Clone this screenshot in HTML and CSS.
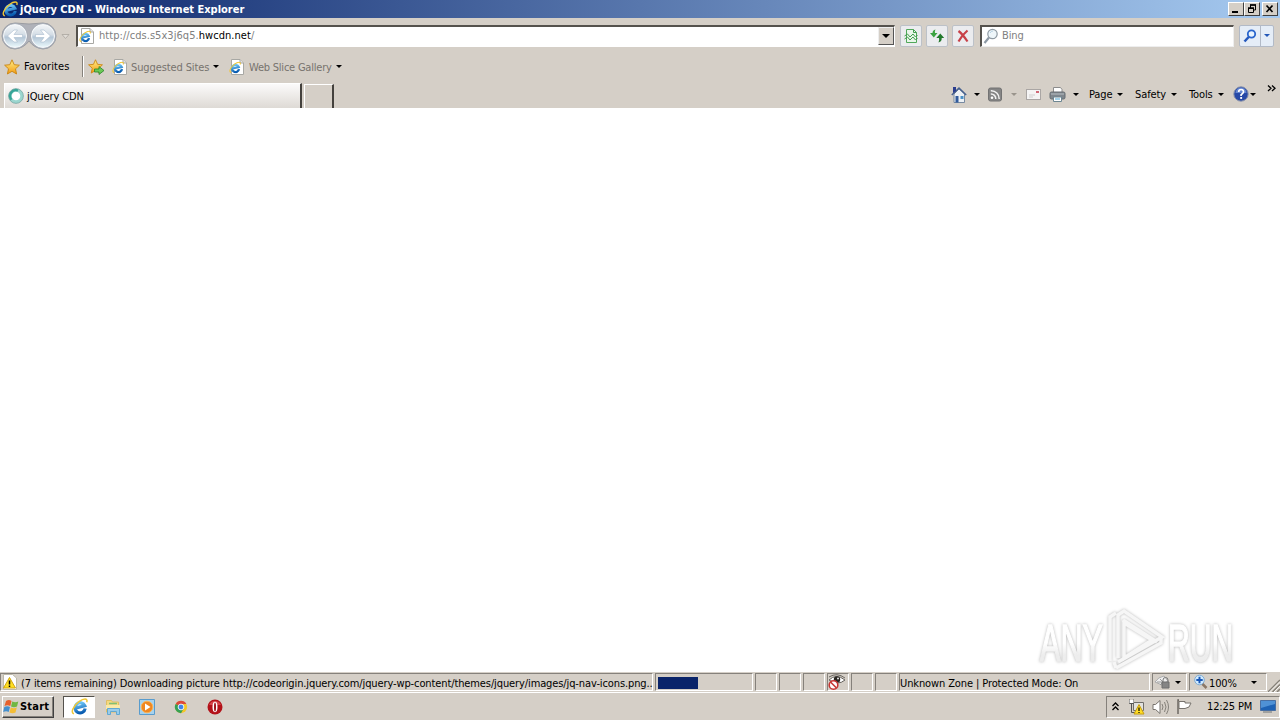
FILE: index.html
```html
<!DOCTYPE html>
<html lang="en">
<head>
    <meta charset="UTF-8">
    <title>jQuery CDN - Windows Internet Explorer</title>
    <link rel="stylesheet" href="styles.css">
</head>
<body>
    <!-- shared icons -->
    <svg class="defs" width="0" height="0">
        <linearGradient id="blue" x1="0" y1="0" x2="0" y2="1">
            <stop offset="0" stop-color="#6cc4f5"/>
            <stop offset="1" stop-color="#0a5cb0"/>
        </linearGradient>
        <linearGradient id="gold" x1="0" y1="0" x2="0" y2="1">
            <stop offset="0" stop-color="#fff08a"/>
            <stop offset="1" stop-color="#f39a10"/>
        </linearGradient>
        <symbol id="ie" viewBox="0 0 16 16">
            <g transform="rotate(-14 8 8)">
                <path d="M12.700 11.200A4.800 4.800 0 1 1 13 8.500H4.500" fill="none" stroke="url(#blue)" stroke-width="3"/>
            </g>
            <path d="M2.800 14.800C-.8 14 2.200 7.200 7.800 3.200 11.500.6 16.200-.3 14.800 4" fill="none" stroke="#f0c634" stroke-width="1.400"/>
        </symbol>
        <symbol id="iepage" viewBox="0 0 16 16">
            <path d="M2.500.5h8.500l3.500 3.500v11.500h-12z" fill="#fff" stroke="#a8a8a4"/>
            <path d="M11 .5V4h3.500" fill="#e4e4e4" stroke="#a8a8a4"/>
            <use href="#ie" x="0" y="2.500" width="12" height="12"/>
        </symbol>
        <symbol id="star" viewBox="0 0 16 16">
            <path d="M8 .8l2.200 4.900 5.200.5-3.900 3.600 1.100 5.200L8 12.300 3.400 15l1.100-5.200L.6 6.200l5.200-.5z" fill="url(#gold)" stroke="#c98410" stroke-width=".9"/>
        </symbol>
    </svg>

    <div class="titlebar">
        <svg class="title-icon" width="16" height="16"><use href="#ie"/></svg>
        <span class="title-text">jQuery CDN - Windows Internet Explorer</span>
        <div class="window-buttons">
            <div class="win-btn"><svg width="14" height="12"><path d="M3 9h6" stroke="#000" stroke-width="2"/></svg></div>
            <div class="win-btn"><svg width="14" height="12"><path d="M5 2h6M5.500 2v3M10.500 2v5H9M3 5.500h6M3.500 5v4.500h5V5" fill="none" stroke="#000"/><path d="M5 2h6M3 5h6" stroke="#000" stroke-width="1.500"/></svg></div>
            <div class="win-btn close"><svg width="14" height="12"><path d="M3.500 2.500l6 6.500M9.500 2.500l-6 6.500" stroke="#000" stroke-width="1.700"/></svg></div>
        </div>
    </div>

    <div class="navbar">
        <svg class="back-forward" width="74" height="30" viewBox="0 0 74 30">
            <defs>
                <linearGradient id="orb" x1="0" y1="0" x2="0" y2="1">
                    <stop offset="0" stop-color="#f4f7f9"/>
                    <stop offset=".45" stop-color="#d3dce5"/>
                    <stop offset=".55" stop-color="#b3c5d6"/>
                    <stop offset="1" stop-color="#ecfafd"/>
                </linearGradient>
            </defs>
            <path d="M15 2Q29 4 43 2A13 13 0 0 1 43 28Q34 27 29 20 24 27 15 28A13 13 0 0 1 15 2z" fill="#b0b2b9" stroke="#9a9ca2"/>
            <circle cx="15" cy="15" r="11.500" fill="url(#orb)" stroke="#f6f8fa" stroke-width="1.300"/>
            <circle cx="43" cy="15" r="11.500" fill="url(#orb)" stroke="#f6f8fa" stroke-width="1.300"/>
            <circle cx="15" cy="15" r="12.500" fill="none" stroke="#a3abb6" stroke-width=".8"/>
            <circle cx="43" cy="15" r="12.500" fill="none" stroke="#a3abb6" stroke-width=".8"/>
            <path d="M22.500 13.500H14l3.500-4.500h-3.500L7.500 15l6.500 6h3.500L14 16.500h8.500z" fill="#fff" stroke="#a9bccf" stroke-width=".6"/>
            <path d="M35.500 13.500H44L40.500 9H44l6.500 6-6.500 6h-3.500l3.500-4.500h-8.500z" fill="#fff" stroke="#a9bccf" stroke-width=".6"/>
            <path d="M62 13.500h7l-3.500 4z" fill="#e1ddd7" stroke="#aaa59e" stroke-width=".8"/>
        </svg>
        <div class="address">
            <svg width="16" height="16"><use href="#iepage"/></svg>
            <span class="url">http://cds.s5x3j6q5.<b>hwcdn.net</b>/</span>
            <div class="drop-btn"><i class="arrow wide"></i></div>
        </div>
        <div class="tool-btn">
            <svg width="16" height="16"><path d="M3.500 1.500h7l3 3v10h-10z" fill="#e9f6ea" stroke="#50a85a"/><path d="M10.500 1.500v3h3M1.500 8l3-2 2.500 3 3-3 2.500 3 2-2M1.500 11l3-2 2.500 3 3-3 2.500 3 2-2" fill="none" stroke="#449d50"/></svg>
        </div>
        <div class="tool-btn">
            <svg width="16" height="16"><path d="M6.500 1.500Q3.500 2 3.500 5H1l3.800 4.500L8.500 5H6Q5.500 3 6.500 1.500z" fill="#3ba340"/><path d="M9.500 14.500q3.500-1 3.200-4.500h2.500L11.300 5.500 7.300 10H10q.6 2.500-.5 4.500z" fill="#23792c"/></svg>
        </div>
        <div class="tool-btn">
            <svg width="16" height="16"><path d="M3.500 3q4 3 9 10.500M12.500 2.500Q7 7 3.500 13.500" fill="none" stroke="#c84048" stroke-width="2.200"/></svg>
        </div>
        <div class="search">
            <svg width="16" height="16"><circle cx="9.500" cy="6" r="4.700" fill="#eef6fa" stroke="#8f9aa3" stroke-width="1.200"/><path d="M6 9.500L1.500 15" stroke="#8d99a5" stroke-width="2.200"/><path d="M7 5q1-2 3-2" fill="none" stroke="#b6d2e3"/></svg>
            <span>Bing</span>
        </div>
        <div class="search-go">
            <div class="go-main"><svg width="16" height="16"><circle cx="9.500" cy="6" r="3.700" fill="#e7f3ff" stroke="#2864cc" stroke-width="1.800"/><path d="M6.700 9L2.500 13.500" stroke="#2458bd" stroke-width="2.500"/></svg></div>
            <div class="go-drop"><i class="arrow blue"></i></div>
        </div>
    </div>

    <div class="favorites">
        <svg width="16" height="16"><use href="#star"/></svg>
        <span class="fav-label">Favorites</span>
        <i class="divider"></i>
        <svg class="add-fav" width="17" height="16"><use href="#star" width="15" height="15"/><path d="M6.500 10H11V7.500l5 4-5 4V13H6.500z" fill="#6cc956" stroke="#27852a" stroke-width=".8"/></svg>
        <svg class="suggested-icon" width="16" height="16"><use href="#iepage"/></svg>
        <span class="link suggested">Suggested Sites</span><i class="arrow"></i>
        <svg class="slice-icon" width="16" height="16"><use href="#iepage"/></svg>
        <span class="link slice">Web Slice Gallery</span><i class="arrow"></i>
    </div>

    <div class="tabrow">
        <div class="tab">
            <svg width="16" height="16"><circle cx="8" cy="8" r="5.800" fill="#fff" stroke="#9bd6cf" stroke-width="3"/><path d="M10 2.500A5.800 5.800 0 0 0 3.500 11.700" fill="none" stroke="#35a698" stroke-width="2.500"/><circle cx="8" cy="8" r="7.400" fill="none" stroke="#6b9e9b" stroke-width=".7"/></svg>
            <span>jQuery CDN</span>
        </div>
        <div class="new-tab"></div>
        <div class="commands">
            <svg class="home" width="16" height="17" viewBox="0 0 16 17"><path d="M3 8v8.500h10.500V8L8 3z" fill="#edf1f5" stroke="#7789a0"/><path d="M.8 9L8 2l7.200 7" fill="none" stroke="#47618f" stroke-width="1.500"/><path d="M2 1h3v4L2 7z" fill="#2b3d8e"/><path d="M4.500 10h3v6.500h-3z" fill="#315b9c"/><path d="M9.500 10h3v3h-3z" fill="#4b91c7"/></svg>
            <i class="arrow a-home"></i>
            <svg class="feed" width="14" height="15" viewBox="0 0 14 15"><rect x=".5" y="1" width="13" height="13" rx="2" fill="#858585" stroke="#727272"/><circle cx="4" cy="10.800" r="1.300" fill="#fff"/><path d="M2.800 7a4.700 4.700 0 0 1 5 5M2.800 3.700a8 8 0 0 1 8.400 8.300" fill="none" stroke="#f2f2f2" stroke-width="1.500"/></svg>
            <i class="arrow a-feed dim"></i>
            <svg class="mail" width="15" height="11" viewBox="0 0 15 11"><rect x=".5" y=".5" width="14" height="10" fill="#f5f4f4" stroke="#aaa6a4"/><path d="M10 2h3v2h-3z" fill="#d06675"/><path d="M3 6h6M3 8h4" stroke="#d0cece"/></svg>
            <svg class="print" width="17" height="17" viewBox="0 0 17 17"><path d="M4.500 6V1.500h7l1.500 2V7" fill="#fff" stroke="#8c8c8c"/><rect x="1" y="6" width="15" height="7" rx="1.500" fill="#80878d" stroke="#666d73"/><path d="M2 8h13" stroke="#b7bec3"/><path d="M4.500 11h8v4.500h-8z" fill="#fff" stroke="#6e8792"/><path d="M6 13h5" stroke="#4ba4d0"/></svg>
            <i class="arrow a-print"></i>
            <span class="cmd page">Page</span><i class="arrow"></i>
            <span class="cmd safety">Safety</span><i class="arrow"></i>
            <span class="cmd tools">Tools</span><i class="arrow"></i>
            <svg class="help" width="16" height="16"><circle cx="8" cy="8" r="7.200" fill="#2749a7" stroke="#8992aa"/><path d="M2.500 7a5.500 5.500 0 0 1 11 0z" fill="#6486d1"/><path d="M5.700 6q0-2.500 2.400-2.500T10.500 6Q10.500 7 8.100 8.800V10" fill="none" stroke="#fff" stroke-width="1.700"/><path d="M7.200 11h1.900v1.900H7.200z" fill="#fff"/></svg>
            <i class="arrow"></i>
            <svg class="chevrons" width="9" height="7"><path d="M1 .5l3 2.700-3 2.700M5 .5l3 2.700-3 2.700" fill="none" stroke="#000" stroke-width="1.300"/></svg>
        </div>
    </div>

    <div class="content">
        <div class="watermark">
            <svg width="210" height="66" viewBox="0 0 210 66">
                <defs>
                    <linearGradient id="mark" x1="0" y1="0" x2="0" y2="1">
                        <stop offset=".5" stop-color="#fff"/>
                        <stop offset=".7" stop-color="#ededed"/>
                    </linearGradient>
                </defs>
                <g class="mark-text">
                    <text transform="translate(4 54) scale(.6 1)">ANY</text>
                    <text transform="translate(132 54) scale(.59 1)">RUN</text>
                </g>
                <g class="mark-logo">
                    <path d="M82 51V8l6-4 38 26-44 25"/>
                    <path d="M88 16v35l28-18z"/>
                    <path d="M74 54V10l6-4M80 61l45-25v-6M80 61l-2-6M87 13l34 22"/>
                </g>
            </svg>
        </div>
    </div>

    <div class="statusbar">
        <div class="pane message">
            <svg width="16" height="16"><path d="M1.500.5h9l4 3.500v11.500h-13z" fill="#fff" stroke="#bdb9aa"/><path d="M7.500 3.500L13.500 14h-12z" fill="#ffdf22" stroke="#d1a512"/><path d="M7.500 6.500v4M7.500 11.500v1.500" stroke="#000" stroke-width="1.500"/></svg>
            <span>(7 items remaining) Downloading picture http://codeorigin.jquery.com/jquery-wp-content/themes/jquery/images/jq-nav-icons.png..</span>
        </div>
        <div class="pane progress"><div class="bar"></div></div>
        <div class="pane small"></div>
        <div class="pane small"></div>
        <div class="pane small"></div>
        <div class="pane small">
            <svg width="20" height="17" viewBox="0 0 20 17"><path d="M2 6q7-7 16 0-7 6-16 0z" fill="#fff" stroke="#65625d"/><path d="M2 3q8-5 16 1" fill="none" stroke="#68645f"/><circle cx="10" cy="5.500" r="3.200" fill="#292622"/><circle cx="11" cy="4.500" r=".9" fill="#fff"/><circle cx="6.500" cy="11" r="4.300" fill="#fff" stroke="#c73532" stroke-width="1.600"/><path d="M3.500 8l6 6" stroke="#c73532" stroke-width="1.600"/></svg>
        </div>
        <div class="pane small"></div>
        <div class="pane small"></div>
        <div class="pane zone"><span>Unknown Zone | Protected Mode: On</span></div>
        <div class="pane privacy">
            <svg width="18" height="16" viewBox="0 0 18 16"><path d="M1 8q3-5 9-6l4 5-6 4z" fill="#efefef" stroke="#aaa"/><path d="M3 8h6M6 5l3 3-3 3" fill="none" stroke="#999"/><path d="M9 8V6a2.500 2.500 0 0 1 5 0v2" fill="none" stroke="#777"/><path d="M8 8h7v6H8z" fill="#858585" stroke="#6e6e6e"/></svg>
            <i class="arrow"></i>
        </div>
        <div class="pane zoom">
            <svg width="14" height="16"><path d="M7.500 9l5 5" stroke="#8b7765" stroke-width="2.500"/><circle cx="5.500" cy="6" r="4.800" fill="#d1ebff" stroke="#7eabd3"/><path d="M5.500 2.800v6.400M2.300 6h6.400" stroke="#1957b7" stroke-width="2"/></svg>
            <span>100%</span><i class="arrow"></i>
        </div>
        <svg class="grip" width="12" height="13"><path d="M0 13L12 1M4.500 13L12 5.500M9 13l3-3" stroke="#858077" stroke-width="1.500"/><path d="M1.500 13L12 2.500M6 13l6-6" stroke="#fff" stroke-width=".8"/></svg>
    </div>

    <div class="taskbar">
        <div class="start">
            <svg width="17" height="16" viewBox="0 0 17 16"><path d="M3 2q3-2 5.500 0L7.300 7Q4.500 5.500 1.500 7z" fill="#e6602c"/><path d="M9.300 2.500q3 1.500 6 0L14 7.500q-3 1.500-6 0z" fill="#70b744"/><path d="M1.300 8q3-1.500 5.700 0L5.700 13q-2.500-1.500-5.500 0z" fill="#438fce"/><path d="M7.800 8.500q3 1.500 6 0L12.500 13.500q-3 1.500-6 0z" fill="#f3bd36"/></svg>
            <span>Start</span>
        </div>
        <div class="task active"><svg width="17" height="17"><use href="#ie"/></svg></div>
        <div class="task"><svg width="16" height="16"><path d="M1.500 1.500h5l1 1.500h6v10h-12z" fill="#f4d982" stroke="#e0bf62"/><path d="M4 4.500h8" stroke="#7fbf74" stroke-width="1.500"/><path d="M1 6h14v4H1z" fill="#fae9a8"/><path d="M2.500 9.500h12v6h-3v-3h-6v3h-3z" fill="#9accea" stroke="#62a8d2"/></svg></div>
        <div class="task"><svg width="16" height="16"><path d="M.5.500h15v15H.5z" fill="#a7d2ed" stroke="#599ccd"/><circle cx="8" cy="8" r="5.800" fill="#ef8721" stroke="#fbb356"/><path d="M6 4.500L11.500 8 6 11.500z" fill="#fff"/></svg></div>
        <div class="task"><svg width="14" height="14" viewBox="0 0 16 16"><circle cx="8" cy="8" r="7" fill="#f4c628"/><path d="M8 8L1.900 4.500A7 7 0 0 1 14.100 4.500H8z" fill="#dd493a"/><path d="M1.900 4.500A7 7 0 0 0 8 15l3-5.200L8 8z" fill="#35a054"/><circle cx="8" cy="8" r="3.300" fill="#3f83e8" stroke="#fff"/></svg></div>
        <div class="task"><svg width="16" height="16"><circle cx="8" cy="8" r="7.500" fill="#b31219"/><path d="M2 6a6.500 6.500 0 0 1 12 0z" fill="#d6454a"/><ellipse cx="8" cy="8" rx="2.500" ry="5.200" fill="#fff"/><ellipse cx="8" cy="8" rx="1" ry="4.500" fill="#9d1219"/></svg></div>
        <div class="tray">
            <svg class="up" width="7" height="9"><path d="M.5 4l3-3 3 3M.5 8l3-3 3 3" fill="none" stroke="#000" stroke-width="1.300"/></svg>
            <svg class="net" width="17" height="16" viewBox="0 0 17 16"><path d="M5.500 3.500h10v8h-10z" fill="#e2e2df" stroke="#706e6b"/><path d="M1.500.5v4h4v-4M3.500 4v9.500H8" fill="none" stroke="#555"/><path d="M1.500 1h4v3h-4z" fill="#fff"/><path d="M11 5.500l5 9.500H6z" fill="#ffdd24" stroke="#c69d12"/><path d="M11 8.500v3.500M11 13v1" stroke="#000" stroke-width="1.200"/></svg>
            <svg class="volume" width="17" height="16" viewBox="0 0 17 16"><path d="M1 5.500h2.500L8 1.500v13L3.500 10.500H1z" fill="#fff" stroke="#77736d"/><path d="M10 5q2 3 0 6M12.500 3q3 5 0 10M14.500 1q4 7 0 14" fill="none" stroke="#85817a"/></svg>
            <svg class="flag" width="17" height="16" viewBox="0 0 17 16"><path d="M2 15V1h1" stroke="#66625d" fill="none" stroke-width="1.400"/><path d="M3 2.500h6v1.500h6L13 8l-4 1.500H3z" fill="#fff" stroke="#77736d"/></svg>
            <span class="clock">12:25 PM</span>
            <svg class="desktop" width="16" height="15" viewBox="0 0 16 15"><path d="M.5 1.500h15v10H.5z" fill="#1e62b4" stroke="#496fa2"/><path d="M1 2h14v3L1 9z" fill="#4f91d5"/><path d="M3 13h9" stroke="#6f7478"/></svg>
        </div>
    </div>
</body>
</html>
```

FILE: styles.css
```css
* {
    box-sizing: border-box;
}

body {
    margin: 0;
    width: 1280px;
    height: 720px;
    overflow: hidden;
    display: flex;
    flex-direction: column;
    background: #d5cfc7;
    color: #000;
    font: 11px/14px "DejaVu Sans Condensed", "DejaVu Sans", sans-serif;
    white-space: nowrap;
    letter-spacing: -0.11px;
}

svg {
    display: block;
    flex: none;
}

.defs {
    position: absolute;
}

.arrow {
    flex: none;
    border: 3px solid transparent;
    border-top-color: #000;
    border-bottom: 0;
}

.arrow.wide {
    border-width: 4px 4px 0;
}

.arrow.blue {
    border-top-color: #2458b8;
}

.arrow.dim {
    border-top-color: #99948c;
}

/* title bar */
.titlebar {
    height: 18px;
    display: flex;
    align-items: center;
    padding: 0 2px;
    background: linear-gradient(to right, #0a246a, #a6caf0);
    color: #fff;
}

.title-text {
    margin-left: 2px;
    padding-top: 1px;
    font-weight: bold;
    letter-spacing: -0.01px;
}

.window-buttons {
    display: flex;
    margin-left: auto;
}

.win-btn {
    width: 16px;
    height: 14px;
    background: #d5cfc7;
    border: 1px solid;
    border-color: #fff #404040 #404040 #fff;
}

.win-btn.close {
    margin-left: 2px;
}

/* address row */
.navbar {
    height: 35px;
    display: flex;
    align-items: center;
}

.back-forward {
    margin-right: 2px;
}

.address {
    width: 819px;
    height: 22px;
    display: flex;
    align-items: center;
    padding-left: 1px;
    background: #fff;
    border: 1px solid #fff;
    border-top: 2px solid #55524d;
    border-left: 2px solid #55524d;
}

.url {
    margin-left: 4px;
    color: #808080;
    letter-spacing: 0.05px;
}

.url b {
    font-weight: normal;
    color: #000;
}

.drop-btn {
    width: 16px;
    height: 18px;
    display: flex;
    align-items: center;
    justify-content: center;
    margin-left: auto;
    background: #d5cfc7;
    border: 1px solid;
    border-color: #eee #555 #555 #eee;
}

.tool-btn {
    width: 22px;
    height: 22px;
    display: flex;
    align-items: center;
    justify-content: center;
    margin-left: 4px;
    background: #ebecef;
    border: 1px solid #bcc1c8;
    border-radius: 2px;
}

.address + .tool-btn {
    margin-left: 5px;
}

.search {
    width: 254px;
    height: 22px;
    display: flex;
    align-items: center;
    margin-left: 6px;
    padding-left: 1px;
    background: #fff;
    border: 1px solid #eee;
    border-top: 2px solid #55524d;
    border-left: 2px solid #55524d;
    color: #808080;
}

.search span {
    margin-left: 3px;
}

.search-go {
    width: 35px;
    height: 22px;
    display: flex;
    margin-left: 5px;
    background: #e5edf7;
    border: 1px solid #b2bac7;
    border-radius: 2px;
}

.go-main,
.go-drop {
    display: flex;
    align-items: center;
    justify-content: center;
}

.go-main {
    width: 21px;
    border-right: 1px solid #b2bac7;
}

.go-drop {
    flex: 1;
}

/* favorites row */
.favorites {
    height: 27px;
    display: flex;
    align-items: center;
    padding-left: 4px;
}

.fav-label {
    width: 58px;
    margin-left: 4px;
    letter-spacing: 0.1px;
}

.divider {
    width: 2px;
    height: 21px;
    background: #85817b;
    border-right: 1px solid #fff;
}

.add-fav {
    margin-left: 4px;
}

.suggested-icon {
    margin-left: 7px;
}

.slice-icon {
    margin-left: 10px;
}

.link {
    margin-left: 3px;
    padding-top: 2px;
    color: #77736e;
}

.suggested {
    width: 82px;
}

.slice {
    width: 87px;
    margin-left: 4px;
    letter-spacing: -0.22px;
}

/* tabs and command bar */
.tabrow {
    height: 28px;
    display: flex;
    align-items: flex-end;
    padding-left: 4px;
}

.tab {
    width: 298px;
    height: 25px;
    display: flex;
    align-items: center;
    padding-left: 3px;
    background: linear-gradient(to bottom, #fbfafa, #dedad5);
    border-top: 1px solid #fff;
    border-left: 1px solid #fff;
    border-right: 2px solid #44413d;
}

.tab span {
    margin-left: 3px;
    padding-top: 1px;
}

.new-tab {
    width: 30px;
    height: 24px;
    margin-left: 2px;
    border: 1px solid #fff;
    border-right: 2px solid #44413d;
    border-bottom: 0;
}

.commands {
    height: 28px;
    display: flex;
    align-items: center;
    margin-left: auto;
    padding-right: 4px;
}

.a-home {
    margin-left: 7px;
}

.feed {
    margin-left: 8px;
}

.a-feed {
    margin-left: 9px;
}

.mail {
    margin-left: 9px;
}

.print {
    margin-left: 8px;
}

.a-print {
    margin-left: 7px;
}

.cmd {
    margin-left: 12px;
    padding-top: 1px;
}

.page {
    width: 28px;
    margin-left: 10px;
}

.safety {
    width: 36px;
}

.tools {
    width: 29px;
}

.help {
    margin: 0 1px 0 9px;
}

.chevrons {
    margin: -12px 0 0 11px;
}

/* page */
.content {
    flex: 1;
    display: flex;
    align-items: flex-end;
    justify-content: flex-end;
    background: #fff;
}

.watermark {
    margin: 0 34px -1px 0;
}

.watermark svg {
    filter: drop-shadow(0 0 1.5px #b8b8b8);
}

.mark-text {
    font: 51px "Liberation Sans", sans-serif;
    letter-spacing: 0;
    fill: url(#mark);
    stroke: url(#mark);
    stroke-width: 1.5;
}

.mark-logo {
    fill: none;
    stroke: #f6f6f6;
    stroke-width: 3.5;
}

/* status bar */
.statusbar {
    height: 21px;
    display: flex;
    align-items: center;
    border-bottom: 1px solid #fff;
}

.pane {
    height: 18px;
    flex: none;
    display: flex;
    align-items: center;
    margin-right: 2px;
    border: 1px solid;
    border-color: #85817b #fff #fff #85817b;
}

.pane span {
    padding-top: 3px;
}

.message {
    width: 653px;
    padding-left: 1px;
}

.message span {
    margin-left: 3px;
}

.progress {
    width: 98px;
    padding: 2px 0 0 2px;
}

.bar {
    width: 40px;
    height: 12px;
    background: #0a246a;
}

.small {
    width: 22px;
}

.small svg {
    margin-left: -1px;
}

.zone {
    width: 251px;
}

.privacy {
    width: 35px;
    padding-left: 1px;
}

.privacy .arrow {
    margin-left: 3px;
}

.zoom {
    width: 78px;
    padding-left: 4px;
}

.zoom span {
    width: 42px;
    margin-left: 1px;
}

.grip {
    margin: 7px 0 0 -1px;
}

/* taskbar */
.taskbar {
    height: 27px;
    display: flex;
    align-items: center;
    padding-left: 2px;
}

.start {
    width: 52px;
    height: 22px;
    display: flex;
    align-items: center;
    margin-right: 9px;
    border: 1px solid;
    border-color: #fff #404040 #404040 #fff;
    box-shadow: inset -1px -1px #85817b;
    font-weight: bold;
    letter-spacing: 0.2px;
}

.task {
    width: 34px;
    height: 22px;
    display: flex;
    align-items: center;
    justify-content: center;
}

.task.active {
    width: 32px;
    margin-right: 1px;
    background: #fff;
    border: 1px solid;
    border-color: #55524d #fff #fff #55524d;
}

.tray {
    width: 174px;
    height: 22px;
    display: flex;
    align-items: center;
    margin-left: auto;
    padding-left: 5px;
    border: 1px solid;
    border-color: #85817b #fff #fff #85817b;
}

.net {
    margin-left: 9px;
}

.volume,
.flag {
    margin-left: 7px;
}

.clock {
    width: 49px;
    margin-left: 14px;
}

.desktop {
    margin-left: 4px;
}
```
